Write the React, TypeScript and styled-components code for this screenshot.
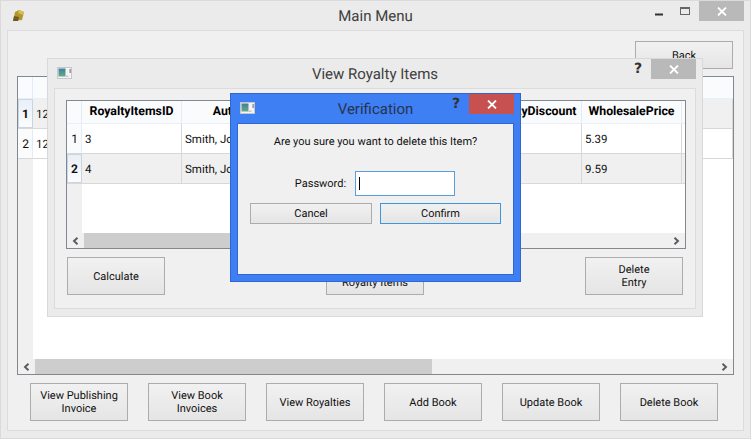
import styled, { createGlobalStyle } from "styled-components";

const GlobalStyle = createGlobalStyle`
  html, body {
    margin: 0;
    padding: 0;
    background: #ebebeb;
  }
  * {
    box-sizing: border-box;
  }
`;

const FONT = `Roboto, "Noto Sans", sans-serif`;

const Shell = styled.div`
  position: relative;
  width: 751px;
  height: 439px;
  display: flex;
  flex-direction: column;
  padding: 0 6px 7px;
  background: #ebebeb;
  border: 1px solid #dadada;
  font-family: ${FONT};
  font-size: 11px;
  text-rendering: geometricPrecision;
  color: #111;
  overflow: hidden;
`;

const Window = styled.div<{ $active?: boolean }>`
  position: absolute;
  display: flex;
  flex-direction: column;
  padding: 0 6px 6px;
  background: ${({ $active }) => ($active ? "#3f7ff4" : "#ebebeb")};
  border: 1px solid ${({ $active }) => ($active ? "#2f66cf" : "#d9d9d9")};
`;

const RoyaltyWindow = styled(Window)`
  left: 46px;
  top: 57px;
  width: 656px;
  height: 259px;
  padding-bottom: 7px;
`;

const VerifyWindow = styled(Window)`
  left: 229px;
  top: 92px;
  width: 291px;
  height: 189px;
`;

const TitleBar = styled.div`
  flex: none;
  height: 29px;
  display: grid;
  grid-template-columns: 1fr auto 1fr;
  align-items: center;
`;

const Title = styled.div<{ $active?: boolean }>`
  font-size: 15px;
  color: ${({ $active }) => ($active ? "#27344f" : "#404040")};
`;

const Controls = styled.div`
  display: flex;
  justify-content: flex-end;
  align-items: flex-start;
  align-self: start;
  height: 100%;
`;

const CloseBox = styled.div<{ $active?: boolean }>`
  width: 45px;
  height: 20px;
  display: flex;
  align-items: center;
  justify-content: center;
  background: ${({ $active }) => ($active ? "#c75050" : "#b9b9b9")};
`;

const Help = styled.div`
  font-family: "DejaVu Sans", sans-serif;
  font-weight: 700;
  font-size: 14px;
  line-height: 20px;
  color: #333;
  margin-right: 9px;
`;

const Caption = styled.div`
  display: flex;
  align-items: center;
  padding-left: 3px;
  margin-bottom: 2px;
`;

const MainCaption = styled(Caption)`
  padding-left: 5px;
  margin-bottom: 0;
`;

const CaptionButton = styled.div`
  width: 28px;
  height: 20px;
  display: flex;
  align-items: center;
  justify-content: center;
`;

const MinimizeButton = styled(CaptionButton)`
  padding-top: 6px;
  margin-right: -2px;
`;

const Panel = styled.div<{ $framed?: boolean }>`
  flex: 1;
  min-height: 0;
  display: flex;
  flex-direction: column;
  background: #f0f0f0;
  border: 1px solid ${({ $framed }) => ($framed ? "#2f66cf" : "#dcdcdc")};
`;

const MainPanel = styled(Panel)`
  padding: 10px 9px 9px;
`;

const BackRow = styled.div`
  display: flex;
  justify-content: flex-end;
  padding-right: 1px;
  margin-bottom: 7px;
`;

const Button = styled.div<{ $focus?: boolean; $short?: boolean }>`
  flex: none;
  width: 98px;
  height: ${({ $short }) => ($short ? "21px" : "38px")};
  display: flex;
  align-items: center;
  justify-content: center;
  text-align: center;
  line-height: 13px;
  background: linear-gradient(#f1f1f1, #e5e5e5);
  border: 1px solid ${({ $focus }) => ($focus ? "#3c96e0" : "#acacac")};
`;

const BackButton = styled(Button)`
  height: 28px;
`;

const CancelButton = styled(Button)`
  width: 122px;
`;

const ConfirmButton = styled(Button)`
  width: 121px;
`;

const BottomRow = styled.div`
  display: flex;
  gap: 20px;
  padding-left: 13px;
  margin-top: 8px;
`;

const TableFrame = styled.div`
  flex: 1;
  min-height: 0;
  display: flex;
  flex-direction: column;
  background: #fff;
  border: 1px solid #828790;
  overflow: hidden;
`;

const TableBody = styled.div`
  flex: 1;
  min-height: 0;
  display: flex;
  flex-direction: column;
  background: linear-gradient(to right, #f0f0f0 15px, #fff 15px);
`;

const Row = styled.div<{ $selected?: boolean }>`
  display: flex;
  height: 30px;
  background: ${({ $selected }) => ($selected ? "#f0f0f0" : "#fff")};
  border-bottom: 1px solid #d8d8d8;
`;

const HeaderRow = styled.div<{ $tall?: boolean }>`
  display: flex;
  height: ${({ $tall }) => ($tall ? "23px" : "22px")};
  background: #fafbfd;
  border-bottom: 1px solid #e8eff8;
`;

const Corner = styled.div`
  flex: none;
  width: 15px;
  border-right: 1px solid #e3ecf6;
`;

const HeadCell = styled.div`
  flex: none;
  width: 100px;
  display: flex;
  align-items: center;
  justify-content: center;
  font-size: 12.3px;
  font-weight: 700;
  white-space: nowrap;
  color: #000;
  border-right: 1px solid #e3ecf6;
`;

const RowHead = styled.div<{ $selected?: boolean }>`
  flex: none;
  width: 15px;
  display: flex;
  align-items: center;
  justify-content: center;
  font-size: 12px;
  font-weight: ${({ $selected }) => ($selected ? 700 : 400)};
  color: #111;
  background: ${({ $selected }) =>
    $selected ? "linear-gradient(#e9eff7, #fbfcfe)" : "#fafbfd"};
  border: 1px solid ${({ $selected }) => ($selected ? "#c9d5e4" : "transparent")};
  border-right-color: ${({ $selected }) => ($selected ? "#c9d5e4" : "#e3ecf6")};
`;

const Cell = styled.div<{ $fill?: boolean }>`
  flex: ${({ $fill }) => ($fill ? 1 : "none")};
  width: 100px;
  display: flex;
  align-items: center;
  padding-left: 3px;
  font-size: 11.5px;
  white-space: nowrap;
  border-right: 1px solid #d8d8d8;
`;

const ScrollBar = styled.div`
  flex: none;
  height: 15px;
  display: flex;
  background: #f0f0f0;
`;

const ScrollButton = styled.div`
  flex: none;
  width: 17px;
  display: flex;
  align-items: center;
  justify-content: center;
`;

const Thumb = styled.div<{ $main?: boolean }>`
  flex: none;
  width: ${({ $main }) => ($main ? "397px" : "300px")};
  background: #cdcdcd;
`;

const Spacer = styled.div`
  flex: 1;
`;

const RoyaltyPanel = styled(Panel)`
  padding: 11px 9px 13px 11px;
`;

const ActionRow = styled.div`
  flex: none;
  display: flex;
  justify-content: space-between;
  padding: 0 3px 0 1px;
  margin-top: 8px;
`;

const VerifyPanel = styled(Panel)`
  align-items: center;
  padding-top: 10px;
`;

const Question = styled.div`
  line-height: 16px;
  margin-bottom: 21px;
`;

const PasswordRow = styled.div`
  display: flex;
  align-items: center;
  gap: 9px;
  padding-right: 1px;
  margin-bottom: 7px;
`;

const PasswordInput = styled.div`
  width: 100px;
  height: 25px;
  display: flex;
  align-items: center;
  padding-left: 3px;
  background: #fff;
  border: 1px solid #5a9fdc;
`;

const Caret = styled.div`
  width: 1px;
  height: 13px;
  background: #000;
`;

const DialogButtons = styled.div`
  display: flex;
  gap: 8px;
`;

const CloseIcon = () => (
  <svg width="10" height="9" viewBox="0 0 10 9">
    <path d="M1 .5 9 8.5M9 .5 1 8.5" stroke="#fff" strokeWidth="1.8" fill="none" />
  </svg>
);

const WindowIcon = () => (
  <svg width="15" height="12" viewBox="0 0 15 12">
    <defs>
      <linearGradient id="winfill" x1="0" y1="0" x2="0" y2="1">
        <stop offset="0" stopColor="#3d7f9a" />
        <stop offset="1" stopColor="#6aa98a" />
      </linearGradient>
    </defs>
    <rect x="0.5" y="0.5" width="14" height="11" fill="#f4f4f4" stroke="#c3c7cc" />
    <rect x="1.5" y="1.5" width="7" height="8" fill="url(#winfill)" />
    <rect x="8.5" y="8.5" width="3" height="1.5" fill="#c4c8cc" />
    <rect x="12.6" y="2" width="1" height="4" fill="#666" />
  </svg>
);

const BookIcon = () => (
  <svg width="13" height="13" viewBox="0 0 13 13">
    <path d="M3 3 7 1l5 2-2 8-9 1z" fill="#b1962f" />
    <path d="M7 1l5 2-1 3-5-2z" fill="#d8c04a" />
    <path d="M2 7l5 1-1 4H1z" fill="#6f5a22" />
  </svg>
);

const Arrow = ({ right }: { right?: boolean }) => (
  <svg width="7" height="8" viewBox="0 0 7 8">
    <path
      d={right ? "M1.5 .8 5 4 1.5 7.2" : "M5.5 .8 2 4 5.5 7.2"}
      stroke="#5a5a5a"
      strokeWidth="1.9"
      fill="none"
    />
  </svg>
);

function Scroller({ main }: { main?: boolean }) {
  return (
    <ScrollBar>
      <ScrollButton>
        <Arrow />
      </ScrollButton>
      <Thumb $main={main} />
      <Spacer />
      <ScrollButton>
        <Arrow right />
      </ScrollButton>
    </ScrollBar>
  );
}

const royaltyColumns = ["RoyaltyItemsID", "Author", "", "", "RoyaltyDiscount", "WholesalePrice"];
const royaltyRows = [
  { id: "3", author: "Smith, Jo", price: "5.39" },
  { id: "4", author: "Smith, Jo", price: "9.59" },
];

function App() {
  return (
    <>
      <GlobalStyle />
      <Shell>
        <TitleBar>
          <MainCaption>
            <BookIcon />
          </MainCaption>
          <Title>Main Menu</Title>
          <Controls>
            <MinimizeButton>
              <svg width="9" height="3" viewBox="0 0 9 3">
                <rect width="8" height="2" y="0.5" fill="#333" />
              </svg>
            </MinimizeButton>
            <CaptionButton>
              <svg width="10" height="8" viewBox="0 0 10 8">
                <rect x="0.5" y="0.5" width="9" height="7" fill="none" stroke="#666" />
                <rect x="0" y="0" width="10" height="2" fill="#666" />
              </svg>
            </CaptionButton>
            <CloseBox>
              <CloseIcon />
            </CloseBox>
          </Controls>
        </TitleBar>

        <MainPanel>
          <BackRow>
            <BackButton>Back</BackButton>
          </BackRow>
          <TableFrame>
            <TableBody>
              <HeaderRow>
                <Corner />
              </HeaderRow>
              <Row $selected>
                <RowHead $selected>1</RowHead>
                <Cell $fill>12</Cell>
              </Row>
              <Row>
                <RowHead>2</RowHead>
                <Cell $fill>12</Cell>
              </Row>
            </TableBody>
            <Scroller main />
          </TableFrame>
          <BottomRow>
            <Button>
              View Publishing
              <br />
              Invoice
            </Button>
            <Button>
              View Book
              <br />
              Invoices
            </Button>
            <Button>View Royalties</Button>
            <Button>Add Book</Button>
            <Button>Update Book</Button>
            <Button>Delete Book</Button>
          </BottomRow>
        </MainPanel>

        <RoyaltyWindow>
          <TitleBar>
            <Caption>
              <WindowIcon />
            </Caption>
            <Title>View Royalty Items</Title>
            <Controls>
              <Help>?</Help>
              <CloseBox>
                <CloseIcon />
              </CloseBox>
            </Controls>
          </TitleBar>
          <RoyaltyPanel>
            <TableFrame>
              <TableBody>
                <HeaderRow $tall>
                  <Corner />
                  {royaltyColumns.map((name, i) => (
                    <HeadCell key={i}>{name}</HeadCell>
                  ))}
                </HeaderRow>
                {royaltyRows.map((row, i) => (
                  <Row key={row.id} $selected={i === 1}>
                    <RowHead $selected={i === 1}>{i + 1}</RowHead>
                    <Cell>{row.id}</Cell>
                    <Cell>{row.author}</Cell>
                    <Cell />
                    <Cell />
                    <Cell />
                    <Cell>{row.price}</Cell>
                  </Row>
                ))}
              </TableBody>
              <Scroller />
            </TableFrame>
            <ActionRow>
              <Button>Calculate</Button>
              <Button>
                View
                <br />
                Royalty Items
              </Button>
              <Button>
                Delete
                <br />
                Entry
              </Button>
            </ActionRow>
          </RoyaltyPanel>
        </RoyaltyWindow>

        <VerifyWindow $active>
          <TitleBar>
            <Caption>
              <WindowIcon />
            </Caption>
            <Title $active>Verification</Title>
            <Controls>
              <Help>?</Help>
              <CloseBox $active>
                <CloseIcon />
              </CloseBox>
            </Controls>
          </TitleBar>
          <VerifyPanel $framed>
            <Question>Are you sure you want to delete this Item?</Question>
            <PasswordRow>
              <span>Password:</span>
              <PasswordInput>
                <Caret />
              </PasswordInput>
            </PasswordRow>
            <DialogButtons>
              <CancelButton $short>Cancel</CancelButton>
              <ConfirmButton $short $focus>
                Confirm
              </ConfirmButton>
            </DialogButtons>
          </VerifyPanel>
        </VerifyWindow>
      </Shell>
    </>
  );
}

export default App;
